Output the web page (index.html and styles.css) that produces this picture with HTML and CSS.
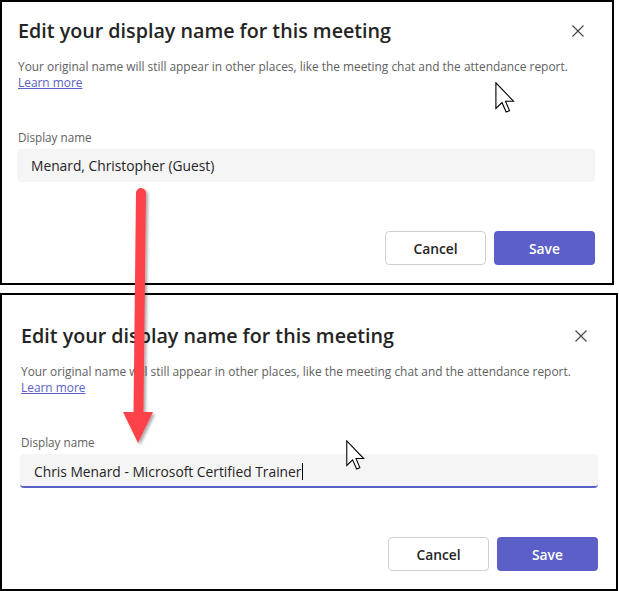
FILE: index.html
```html
<!DOCTYPE html>
<html lang="en">
<head>
<meta charset="utf-8">
<title>Edit display name</title>
<link rel="stylesheet" href="styles.css">
</head>
<body>
<div class="page">
  <section class="panel panel-top">
    <div class="header">
      <h1 class="title">Edit your display name for this meeting</h1>
      <button class="close" aria-label="Close"><svg width="12" height="12" viewBox="0 0 12 12"><path d="M0.5 0.5 L11.5 11.5 M11.5 0.5 L0.5 11.5" stroke="#424242" stroke-width="1.1" fill="none"/></svg></button>
    </div>
    <p class="desc">Your original name will still appear in other places, like the meeting chat and the attendance report.<br><a href="#">Learn more</a></p>
    <label class="label">Display name</label>
    <div class="field">Menard, Christopher (Guest)</div>
    <div class="actions">
      <button class="btn btn-secondary">Cancel</button>
      <button class="btn btn-primary">Save</button>
    </div>
  </section>

  <section class="panel panel-bottom">
    <div class="header">
      <h1 class="title">Edit your display name for this meeting</h1>
      <button class="close" aria-label="Close"><svg width="12" height="12" viewBox="0 0 12 12"><path d="M0.5 0.5 L11.5 11.5 M11.5 0.5 L0.5 11.5" stroke="#424242" stroke-width="1.1" fill="none"/></svg></button>
    </div>
    <p class="desc">Your original name will still appear in other places, like the meeting chat and the attendance report.<br><a href="#">Learn more</a></p>
    <label class="label">Display name</label>
    <div class="field field-focus">Chris Menard - Microsoft Certified Trainer<span class="caret"></span></div>
    <div class="actions">
      <button class="btn btn-secondary">Cancel</button>
      <button class="btn btn-primary">Save</button>
    </div>
  </section>

  <svg class="arrow" width="619" height="591" viewBox="0 0 619 591">
    <defs>
      <filter id="sh" x="-50%" y="-10%" width="200%" height="120%">
        <feDropShadow dx="2" dy="2" stdDeviation="1.6" flood-color="#000" flood-opacity="0.35"/>
      </filter>
    </defs>
    <g filter="url(#sh)" fill="#fd4248" stroke="#fd4248">
      <line x1="141" y1="193" x2="138.5" y2="414" stroke-width="10" stroke-linecap="round"/>
      <polygon points="123,412 153,412 138,443" stroke="none"/>
    </g>
  </svg>

  <svg class="cursor cursor-top" width="21" height="32" viewBox="0 0 13 20"><path d="M0.5 0.5 L0.5 16.5 L4.3 12.8 L6.9 18.8 L9 17.9 L6.5 12 L11.5 12 Z" fill="#fff" stroke="#000" stroke-width="0.7" stroke-linejoin="miter"/></svg>
  <svg class="cursor cursor-bottom" width="20" height="31" viewBox="0 0 13 20"><path d="M0.5 0.5 L0.5 16.5 L4.3 12.8 L6.9 18.8 L9 17.9 L6.5 12 L11.5 12 Z" fill="#fff" stroke="#000" stroke-width="0.7" stroke-linejoin="miter"/></svg>
</div>
</body>
</html>
```
FILE: styles.css
```css
* { box-sizing: border-box; }

body {
  margin: 0;
  background: #fff;
  font-family: "Open Sans", "Noto Sans", sans-serif;
  color: #242424;
}

.page {
  position: relative;
  width: 619px;
  height: 591px;
  display: flex;
  flex-direction: column;
  gap: 8px;
}

.panel {
  border: 2px solid #000;
  background: #fff;
  display: flex;
  flex-direction: column;
}

.panel-top {
  width: 614px;
  height: 285px;
  padding: 15px 17px 0 15px;
}

.panel-bottom {
  width: 618px;
  height: 298px;
  padding: 27px 18px 0 18px;
}

.header {
  display: flex;
  align-items: center;
  justify-content: space-between;
  height: 28px;
}

.title {
  margin: 0;
  padding-left: 1px;
  font-size: 19.7px;
  font-weight: 600;
  line-height: 28px;
  color: #242424;
}

.close {
  width: 24px;
  height: 24px;
  margin-right: 5px;
  border: 0;
  padding: 0;
  background: none;
  display: flex;
  align-items: center;
  justify-content: center;
}

.desc {
  margin: 13px 0 0;
  padding-left: 1px;
  font-size: 11.9px;
  line-height: 16px;
  color: #616161;
}

.desc a {
  color: #5b5fc7;
  text-decoration: underline;
}

.label {
  display: block;
  margin-top: 39px;
  padding-left: 1px;
  font-size: 11.7px;
  line-height: 16px;
  color: #616161;
}

.field {
  height: 33px;
  margin-top: 4px;
  background: #f5f5f5;
  border-radius: 4px;
  padding: 0 13px 0 14px;
  font-size: 13.8px;
  color: #242424;
  display: flex;
  align-items: center;
}

.field-focus {
  height: 34px;
  border-bottom: 2px solid #5b5fc7;
  padding-top: 2px;
}

.caret {
  display: inline-block;
  width: 1px;
  height: 17px;
  background: #000;
  margin-left: 1px;
}

.actions {
  display: flex;
  justify-content: flex-end;
  gap: 8px;
  margin-top: 49px;
}

.btn {
  width: 101px;
  height: 34px;
  border-radius: 4px;
  font-family: "Open Sans", "Noto Sans", sans-serif;
  font-size: 13.8px;
  font-weight: 600;
  padding: 0;
}

.btn-secondary {
  background: #fff;
  border: 1px solid #d1d1d1;
  color: #242424;
}

.btn-primary {
  background: #5b5fc7;
  border: 0;
  color: #fff;
}

.arrow {
  position: absolute;
  left: 0;
  top: 0;
  pointer-events: none;
}

.cursor {
  position: absolute;
  pointer-events: none;
}

.cursor-top {
  left: 495px;
  top: 82px;
}

.cursor-bottom {
  left: 346px;
  top: 440px;
}
```
